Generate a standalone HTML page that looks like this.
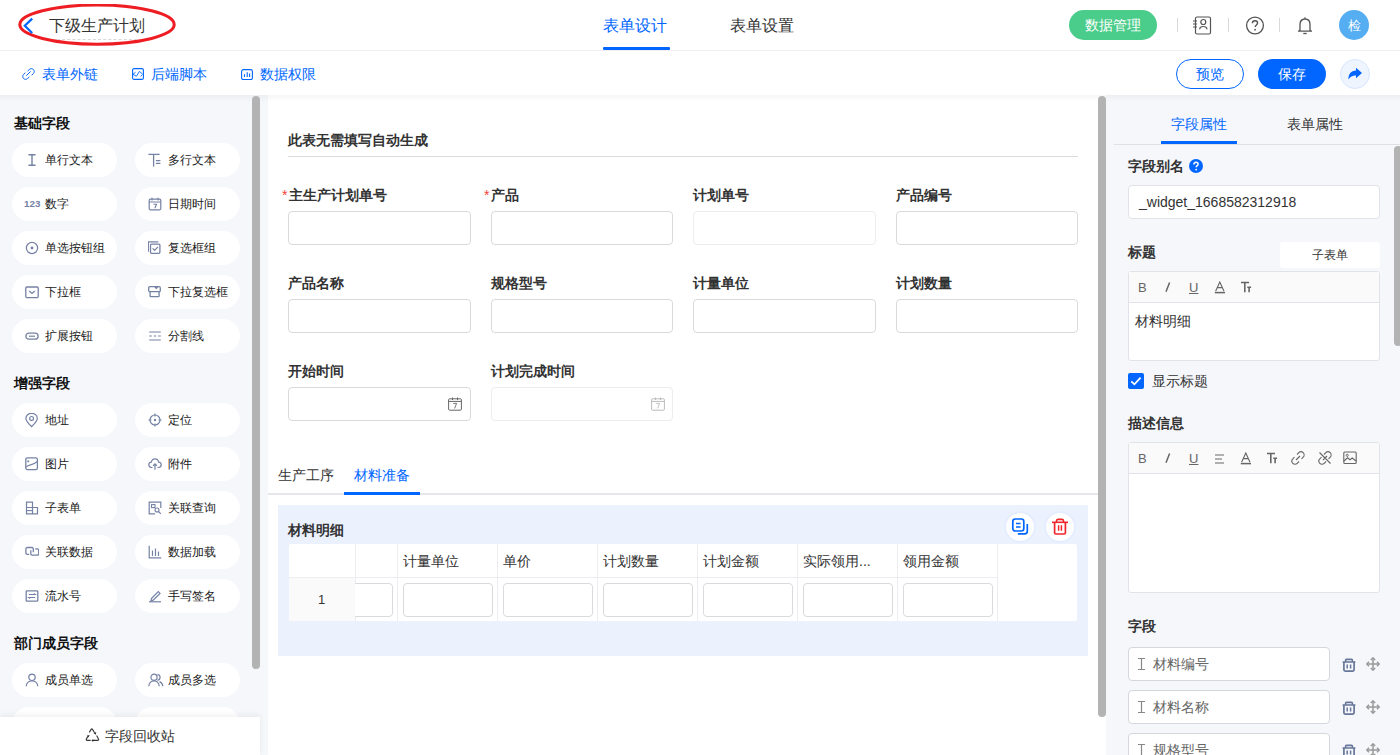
<!DOCTYPE html>
<html><head><meta charset="utf-8">
<style>
*{box-sizing:border-box;margin:0;padding:0}
html,body{width:1400px;height:755px;overflow:hidden;background:#fff;font-family:"Liberation Sans",sans-serif;color:#333}
.abs{position:absolute}
#hdr{position:absolute;left:0;top:0;width:1400px;height:51px;background:#fff;border-bottom:1px solid #f0f0f0}
#bar{position:absolute;left:0;top:51px;width:1400px;height:44px;background:#fff}
#left{position:absolute;left:0;top:95px;width:268px;height:660px;background:#f5f7fb;overflow:hidden}
#canvas{position:absolute;left:268px;top:95px;width:838px;height:660px;background:#fff;overflow:hidden}
#right{position:absolute;left:1106px;top:95px;width:294px;height:660px;background:#f5f7fb;overflow:hidden}
.shadow{position:absolute;left:0;top:95px;width:1400px;height:7px;background:linear-gradient(rgba(0,0,20,0.035),rgba(0,0,20,0));pointer-events:none}
.sb{z-index:3}
.t{position:absolute;white-space:nowrap;line-height:1}
.blue{color:#0066ff}
.sec{position:absolute;left:14px;font-size:14px;font-weight:bold;color:#111;line-height:1}
.pill{position:absolute;width:105px;height:34px;border-radius:17px;background:#fff}
.pill span{position:absolute;left:33px;top:10px;font-size:12px;line-height:14px;color:#1a1a1a;white-space:nowrap}
.pill svg{position:absolute;left:13px;top:10px}
.lbl{position:absolute;font-size:14px;font-weight:bold;color:#333;line-height:1;white-space:nowrap}
.inp{position:absolute;width:183px;height:34px;border:1px solid #d9dadd;border-radius:4px;background:#fff}
.req{color:#f04134;font-weight:normal;position:absolute;left:-7px;top:0}
</style></head><body>

<!-- header -->
<div id="hdr">
  <svg class="abs" style="left:18px;top:4px" width="160" height="43"><ellipse cx="79" cy="20.6" rx="77.2" ry="19.6" fill="none" stroke="#ee1d23" stroke-width="3"/></svg>
  <svg class="abs" style="left:21px;top:17px" width="14" height="18"><path d="M11.2 1.6 L3.8 8.8 L11.2 16" fill="none" stroke="#0066ff" stroke-width="2.2"/></svg>
  <div class="t" style="left:49px;top:18px;font-size:16px;color:#333">下级生产计划</div>
  <div class="abs" style="left:57px;top:39px;width:80px;border-top:1px dashed #d8d8d8"></div>

  <div class="t blue" style="left:603px;top:18px;font-size:16px">表单设计</div>
  <div class="abs" style="left:603px;top:47px;width:67px;height:3px;background:#0066ff;border-radius:1px"></div>
  <div class="t" style="left:730px;top:18px;font-size:16px;color:#333">表单设置</div>

  <div class="abs" style="left:1069px;top:10px;width:88px;height:30px;border-radius:15px;background:#4acc8a"></div>
  <div class="t" style="left:1085px;top:18px;font-size:14px;color:#fff">数据管理</div>
  <div class="abs" style="left:1177px;top:18px;width:1px;height:14px;background:#d9d9d9"></div>
  <div class="abs" style="left:1228px;top:18px;width:1px;height:14px;background:#d9d9d9"></div>
  <div class="abs" style="left:1279px;top:18px;width:1px;height:14px;background:#d9d9d9"></div>
  <!-- contacts icon -->
  <svg class="abs" style="left:1192px;top:16px" width="20" height="19" viewBox="0 0 20 19"><rect x="3.5" y="1" width="15" height="17" rx="1.5" fill="none" stroke="#555" stroke-width="1.2"/><circle cx="11.3" cy="6" r="2.5" fill="none" stroke="#555" stroke-width="1.2"/><path d="M7.6 13.2 C8 9.6 14.6 9.6 15 13.2" fill="none" stroke="#555" stroke-width="1.2"/><path d="M1 5h4M1 8h4M1 11h4" stroke="#555" stroke-width="1.1"/></svg>
  <!-- help -->
  <svg class="abs" style="left:1245px;top:16px" width="20" height="20" viewBox="0 0 20 20"><circle cx="10" cy="9.5" r="8.4" fill="none" stroke="#555" stroke-width="1.3"/><path d="M7.4 7.3 C7.4 5.6 8.6 4.8 10 4.8 C11.5 4.8 12.6 5.7 12.6 7.1 C12.6 8.8 10.2 9.1 10.2 11" fill="none" stroke="#555" stroke-width="1.4"/><circle cx="10.1" cy="13.7" r="0.9" fill="#555"/></svg>
  <!-- bell -->
  <svg class="abs" style="left:1297px;top:16px" width="16" height="19" viewBox="0 0 16 19"><path d="M8 1.2 v1.5" stroke="#555" stroke-width="1.2"/><path d="M3 14 V8.5 C3 5 5.2 3 8 3 C10.8 3 13 5 13 8.5 V14 L14.5 15.2 H1.5 Z" fill="none" stroke="#555" stroke-width="1.3" stroke-linejoin="round"/><path d="M6.3 17.5 h3.4" stroke="#555" stroke-width="1.3"/></svg>
  <div class="abs" style="left:1339px;top:10px;width:30px;height:30px;border-radius:50%;background:#55adf2"></div>
  <div class="t" style="left:1348px;top:19px;font-size:13px;color:#fff">检</div>
</div>

<!-- toolbar -->
<div id="bar">
  <svg class="abs" style="left:22px;top:17px" width="13" height="12" viewBox="0 0 13 12"><path d="M5.5 3.2 L7.3 1.5 C8.5 0.4 10.3 0.4 11.4 1.5 C12.5 2.6 12.5 4.4 11.4 5.5 L9.6 7.3 M7.4 8.8 L5.6 10.5 C4.5 11.6 2.7 11.6 1.6 10.5 C0.5 9.4 0.5 7.6 1.6 6.5 L3.4 4.7 M4.3 7.7 L8.6 3.4" fill="none" stroke="#0066ff" stroke-width="1"/></svg>
  <div class="t blue" style="left:42px;top:16px;font-size:14px">表单外链</div>
  <svg class="abs" style="left:132px;top:17px" width="12" height="12" viewBox="0 0 12 12"><rect x="0.6" y="0.6" width="10.8" height="10.8" rx="1.5" fill="none" stroke="#0066ff" stroke-width="1.1"/><path d="M3.6 4.2 L1 6.3 L4.4 8.3 L7.4 3.4 L10.8 6.3 M10.3 6.8 L8.6 8.3" fill="none" stroke="#0066ff" stroke-width="0.9" stroke-linejoin="round"/></svg>
  <div class="t blue" style="left:151px;top:16px;font-size:14px">后端脚本</div>
  <svg class="abs" style="left:241px;top:17px" width="12" height="12" viewBox="0 0 12 12"><rect x="0.6" y="1.6" width="10.8" height="10" rx="1.8" fill="none" stroke="#0066ff" stroke-width="1.1"/><path d="M3.5 9 V6.2 M6.2 9 V4.2 M8.6 9 V5.6" stroke="#0066ff" stroke-width="1.1"/></svg>
  <div class="t blue" style="left:260px;top:16px;font-size:14px">数据权限</div>

  <div class="abs" style="left:1176px;top:8px;width:68px;height:30px;border-radius:15px;border:1px solid #0066ff;background:#fff"></div>
  <div class="t blue" style="left:1196px;top:16px;font-size:14px">预览</div>
  <div class="abs" style="left:1258px;top:8px;width:68px;height:30px;border-radius:15px;background:#0066ff"></div>
  <div class="t" style="left:1278px;top:16px;font-size:14px;color:#fff">保存</div>
  <div class="abs" style="left:1340px;top:8px;width:30px;height:30px;border-radius:50%;background:#eff5ff;border:1px solid #d7e6fd"></div>
  <svg class="abs" style="left:1347px;top:16px" width="16" height="14" viewBox="0 0 16 14"><path d="M9 0.8 L15 6 L9 11.2 V8.4 C5.5 8.3 3.2 9.8 1.4 12.4 C1.4 7.4 4 3.8 9 3.6 Z" fill="#0066ff"/></svg>
</div>

<!-- LEFT PANEL -->
<div class="abs" style="left:0;top:95px;width:268px;height:660px;background:#f5f7fb"></div>
<div class="sec" style="top:116px">基础字段</div>
<div class="pill" style="left:12px;top:143px"><svg width="14" height="14" viewBox="0 0 14 14"><path d="M3.5 1.8h7M3.5 12.2h7M7 1.8v10.4" stroke="#7582a4" stroke-width="1.4" fill="none"/></svg><span>单行文本</span></div>
<div class="pill" style="left:135px;top:143px"><svg width="14" height="14" viewBox="0 0 14 14"><path d="M0.4 1.4h11.2M5.6 1.4v12.2M7.9 7.6h4.5M7.9 10.4h4.5" stroke="#7582a4" stroke-width="1.3" fill="none"/></svg><span>多行文本</span></div>
<div class="pill" style="left:12px;top:187px"><svg style="left:12px" width="18" height="14" viewBox="0 0 18 14"><text x="0" y="9.9" font-family="Liberation Sans" font-size="9.8" font-weight="bold" fill="#7582a4">123</text></svg><span>数字</span></div>
<div class="pill" style="left:135px;top:187px"><svg width="14" height="14" viewBox="0 0 14 14"><rect x="1.2" y="2.2" width="11.6" height="10.6" rx="1.2" stroke="#7582a4" stroke-width="1.2" fill="none"/><path d="M4 0.8v2.6M10 0.8v2.6M1.2 5h11.6M5.5 7.3h3l-1.6 4" stroke="#7582a4" stroke-width="1.1" fill="none"/></svg><span>日期时间</span></div>
<div class="pill" style="left:12px;top:231px"><svg width="14" height="14" viewBox="0 0 14 14"><circle cx="7" cy="7" r="5.6" stroke="#7582a4" stroke-width="1.2" fill="none"/><circle cx="7" cy="7" r="1.4" fill="#7582a4"/></svg><span>单选按钮组</span></div>
<div class="pill" style="left:135px;top:231px"><svg width="14" height="14" viewBox="0 0 14 14"><path d="M0.3 10.7V0.9h10" stroke="#7582a4" stroke-width="1.3" fill="none"/><rect x="2.5" y="3.1" width="9.4" height="9.2" rx="1" stroke="#7582a4" stroke-width="1.3" fill="none"/><path d="M4.6 7.4l2 2 3.3-3.6" stroke="#7582a4" stroke-width="1.2" fill="none"/></svg><span>复选框组</span></div>
<div class="pill" style="left:12px;top:275px"><svg width="14" height="14" viewBox="0 0 14 14"><rect x="0.8" y="2" width="12.4" height="10.6" rx="1" stroke="#7582a4" stroke-width="1.3" fill="none"/><path d="M4.3 5.9l2.7 2.5 2.7-2.5" stroke="#7582a4" stroke-width="1.3" fill="none"/></svg><span>下拉框</span></div>
<div class="pill" style="left:135px;top:275px"><svg width="14" height="14" viewBox="0 0 14 14"><rect x="0.7" y="1.7" width="11.6" height="5" rx="1.2" stroke="#7582a4" stroke-width="1.3" fill="none"/><path d="M2.1 6.7v4.3c0 0.4 0.3 0.7 0.7 0.7h7.6c0.4 0 0.7-0.3 0.7-0.7V6.7" stroke="#7582a4" stroke-width="1.3" fill="none"/><path d="M6.6 1.7l1.7 2.3 1.7-2.3z" fill="#7582a4" stroke="#7582a4" stroke-width="0.8"/></svg><span>下拉复选框</span></div>
<div class="pill" style="left:12px;top:319px"><svg width="14" height="14" viewBox="0 0 14 14"><rect x="0.9" y="4.2" width="12.2" height="6" rx="3" stroke="#7582a4" stroke-width="1.3" fill="none"/><path d="M4 7.2h6" stroke="#7582a4" stroke-width="1.2"/></svg><span>扩展按钮</span></div>
<div class="pill" style="left:135px;top:319px"><svg width="14" height="14" viewBox="0 0 14 14"><path d="M1.2 3h11.6M1.2 11h11.6M1.2 7h2.6M5.7 7h2.6M10.2 7h2.6" stroke="#7582a4" stroke-width="1.2" fill="none"/></svg><span>分割线</span></div>

<div class="sec" style="top:376px">增强字段</div>
<div class="pill" style="left:12px;top:403px"><svg style="left:13px" width="14" height="15" viewBox="0 0 14 15"><path d="M6.6 13.6C3.6 10.6 0.9 8 0.9 5.4 0.9 2.3 3.5 0.3 6.6 0.3s5.7 2 5.7 5.1c0 2.6-2.7 5.2-5.7 8.2z" stroke="#7582a4" stroke-width="1.2" fill="none"/><circle cx="6.6" cy="5.4" r="1.9" stroke="#7582a4" stroke-width="1.2" fill="none"/></svg><span>地址</span></div>
<div class="pill" style="left:135px;top:403px"><svg width="14" height="14" viewBox="0 0 14 14"><circle cx="7" cy="7" r="5" stroke="#7582a4" stroke-width="1.2" fill="none"/><path d="M7 0.5v3M7 10.5v3M0.5 7h3M10.5 7h3" stroke="#7582a4" stroke-width="1.2"/><circle cx="7" cy="7" r="1.2" fill="#7582a4"/></svg><span>定位</span></div>
<div class="pill" style="left:12px;top:447px"><svg width="14" height="14" viewBox="0 0 14 14"><rect x="0.8" y="0.8" width="11.6" height="11.8" rx="1.6" stroke="#7582a4" stroke-width="1.3" fill="none"/><path d="M1 10.2C4.5 6.5 6.5 9.5 12.3 4.5" stroke="#7582a4" stroke-width="1.1" fill="none"/><path d="M3.2 3.2v2.2M2.1 4.3h2.2" stroke="#7582a4" stroke-width="0.9"/></svg><span>图片</span></div>
<div class="pill" style="left:135px;top:447px"><svg width="14" height="14" viewBox="0 0 14 14"><path d="M4.5 10.5H3.6C2 10.5 0.8 9.3 0.8 7.8 0.8 6.4 1.9 5.2 3.3 5.1 3.7 3.1 5.2 1.8 7 1.8s3.3 1.3 3.7 3.3c1.4 0.1 2.5 1.3 2.5 2.7 0 1.5-1.2 2.7-2.8 2.7h-0.9" stroke="#7582a4" stroke-width="1.2" fill="none"/><path d="M7 12.8V7M5 8.8L7 6.8 9 8.8" stroke="#7582a4" stroke-width="1.2" fill="none"/></svg><span>附件</span></div>
<div class="pill" style="left:12px;top:491px"><svg width="14" height="14" viewBox="0 0 14 14"><path d="M1.5 1.2h6v11.6h-6zM1.5 6.5h11v6.3h-5" stroke="#7582a4" stroke-width="1.2" fill="none"/><path d="M1.5 9.6h6" stroke="#7582a4" stroke-width="1.1"/></svg><span>子表单</span></div>
<div class="pill" style="left:135px;top:491px"><svg width="14" height="14" viewBox="0 0 14 14"><path d="M12.8 7V1.2H1.2v11.6H7" stroke="#7582a4" stroke-width="1.2" fill="none"/><rect x="3.5" y="3.6" width="3.5" height="3" stroke="#7582a4" stroke-width="1.1" fill="none"/><circle cx="9" cy="9" r="2" stroke="#7582a4" stroke-width="1.1" fill="none"/><path d="M10.5 10.5l2.3 2.3" stroke="#7582a4" stroke-width="1.2"/></svg><span>关联查询</span></div>
<div class="pill" style="left:12px;top:535px"><svg width="14" height="14" viewBox="0 0 14 14"><path d="M8.3 7.2V3.9C8.3 3.1 7.7 2.5 6.9 2.5H2.3C1.5 2.5 0.9 3.1 0.9 3.9V8C0.9 8.8 1.5 9.4 2.3 9.4H4.2" stroke="#7582a4" stroke-width="1.3" fill="none"/><path d="M5.8 5.2V8.8C5.8 9.6 6.4 10.2 7.2 10.2H12.3C13.1 10.2 13.7 9.6 13.7 8.8V5.3C13.7 4.5 13.1 3.9 12.3 3.9H10.2" stroke="#7582a4" stroke-width="1.3" fill="none"/></svg><span>关联数据</span></div>
<div class="pill" style="left:135px;top:535px"><svg width="14" height="14" viewBox="0 0 14 14"><path d="M1.2 0.8v12h12M4.5 5.5v5.5M7.5 3.5v7.5M10.5 6.5v4.5" stroke="#7582a4" stroke-width="1.2" fill="none"/></svg><span>数据加载</span></div>
<div class="pill" style="left:12px;top:579px"><svg width="14" height="14" viewBox="0 0 14 14"><rect x="1.2" y="1.8" width="11.6" height="10.4" rx="0.8" stroke="#7582a4" stroke-width="1.3" fill="none"/><path d="M3.8 5.5h6.4l-1.3-1M10.2 8.5H3.8l1.3 1" stroke="#7582a4" stroke-width="1.1" fill="none"/></svg><span>流水号</span></div>
<div class="pill" style="left:135px;top:579px"><svg width="14" height="14" viewBox="0 0 14 14"><path d="M3.5 9.5l6.8-6.8 1.7 1.7-6.8 6.8-2.3 0.6z" stroke="#7582a4" stroke-width="1.2" fill="none"/><path d="M1 12.8h12" stroke="#7582a4" stroke-width="1.2"/></svg><span>手写签名</span></div>

<div class="sec" style="top:636px">部门成员字段</div>
<div class="pill" style="left:12px;top:663px"><svg width="14" height="14" viewBox="0 0 14 14"><circle cx="7" cy="4.3" r="3.2" stroke="#7582a4" stroke-width="1.2" fill="none"/><path d="M1.2 13.2C1.5 9.8 3.8 8 7 8s5.5 1.8 5.8 5.2" stroke="#7582a4" stroke-width="1.2" fill="none"/></svg><span>成员单选</span></div>
<div class="pill" style="left:135px;top:663px"><svg width="16" height="14" viewBox="0 0 16 14"><circle cx="6" cy="4.3" r="3.1" stroke="#7582a4" stroke-width="1.2" fill="none"/><path d="M0.8 13.2C1.1 9.8 3 8 6 8s4.9 1.8 5.2 5.2M9.5 1.3c1.6 0.3 2.6 1.5 2.6 3s-1 2.7-2.6 3M11.5 8.6c1.9 0.7 3.1 2.2 3.3 4.6" stroke="#7582a4" stroke-width="1.2" fill="none"/></svg><span>成员多选</span></div>
<div class="pill" style="left:12px;top:707px"></div>
<div class="pill" style="left:135px;top:707px"></div>
<!-- left scrollbar -->
<div class="abs" style="left:252px;top:96px;width:8px;height:573px;border-radius:4px;background:#b3b3b3;z-index:3"></div>
<!-- recycle bin -->
<div class="abs" style="left:0;top:717px;width:260px;height:38px;background:#fff;box-shadow:0 -2px 6px rgba(0,0,0,0.06)"></div>
<svg class="abs" style="left:85px;top:728px" width="15" height="15" viewBox="0 0 15 15"><g stroke="#333" stroke-width="1.1" fill="none" stroke-linejoin="round"><path d="M4.3 4.4L6.1 1.4Q6.8 0.4 7.5 1.4L9.6 4.8"/><path d="M11.6 7.6L13.5 10.9Q14.1 12.4 12.5 12.4H7.8"/><path d="M5.6 12.4H2.3Q0.7 12.4 1.4 10.9L3.1 8"/></g><path d="M8.6 5.3L11.2 3.9 10.9 6.8z" fill="#333"/><path d="M8.2 10.9L6.3 12.4 8.2 13.9z" fill="#333"/><path d="M2 7.6L4.7 7.1 3.5 9.6z" fill="#333"/></svg>
<div class="t" style="left:105px;top:729px;font-size:14px;color:#333">字段回收站</div>

<!-- CANVAS -->
<div class="abs" style="left:268px;top:95px;width:838px;height:660px;background:#fff"></div>
<div class="lbl" style="left:288px;top:133px;color:#333">此表无需填写自动生成</div>
<div class="abs" style="left:288px;top:156px;width:790px;height:1px;background:#dcdcdc"></div>

<div class="lbl" style="left:289px;top:188px"><span class="req">*</span>主生产计划单号</div>
<div class="lbl" style="left:491px;top:188px"><span class="req">*</span>产品</div>
<div class="lbl" style="left:693px;top:188px">计划单号</div>
<div class="lbl" style="left:896px;top:188px">产品编号</div>
<div class="inp" style="left:288px;top:211px"></div>
<div class="inp" style="left:491px;top:211px;width:182px"></div>
<div class="inp" style="left:693px;top:211px;border-color:#ebedf0"></div>
<div class="inp" style="left:896px;top:211px;width:182px"></div>

<div class="lbl" style="left:288px;top:276px">产品名称</div>
<div class="lbl" style="left:491px;top:276px">规格型号</div>
<div class="lbl" style="left:693px;top:276px">计量单位</div>
<div class="lbl" style="left:896px;top:276px">计划数量</div>
<div class="inp" style="left:288px;top:299px"></div>
<div class="inp" style="left:491px;top:299px;width:182px"></div>
<div class="inp" style="left:693px;top:299px"></div>
<div class="inp" style="left:896px;top:299px;width:182px"></div>

<div class="lbl" style="left:288px;top:364px">开始时间</div>
<div class="lbl" style="left:491px;top:364px">计划完成时间</div>
<div class="inp" style="left:288px;top:387px"></div>
<div class="inp" style="left:491px;top:387px;width:182px;border-color:#ebedf0"></div>
<svg class="abs" style="left:448px;top:397px" width="14" height="14" viewBox="0 0 14 14"><rect x="0.6" y="1.8" width="12.8" height="11.4" rx="1" stroke="#666" stroke-width="1" fill="none"/><path d="M0.6 4.4h12.8M4.5 0.5v2.5M9.5 0.5v2.5" stroke="#666" stroke-width="1"/><path d="M5.2 6.4h3.4L6.6 11.4" stroke="#666" stroke-width="0.9" fill="none"/></svg>
<svg class="abs" style="left:651px;top:397px" width="14" height="14" viewBox="0 0 14 14"><rect x="0.6" y="1.8" width="12.8" height="11.4" rx="1" stroke="#bbb" stroke-width="1" fill="none"/><path d="M0.6 4.4h12.8M4.5 0.5v2.5M9.5 0.5v2.5" stroke="#bbb" stroke-width="1"/><path d="M5.2 6.4h3.4L6.6 11.4" stroke="#bbb" stroke-width="0.9" fill="none"/></svg>

<!-- tabs -->
<div class="t" style="left:278px;top:468px;font-size:14px;color:#333">生产工序</div>
<div class="t blue" style="left:354px;top:468px;font-size:14px">材料准备</div>
<div class="abs" style="left:268px;top:493px;width:830px;height:2px;background:#e4e6ea"></div>
<div class="abs" style="left:344px;top:492px;width:76px;height:3px;background:#0066ff"></div>

<!-- subform -->
<div class="abs" style="left:278px;top:505px;width:810px;height:151px;background:#ebf2fe"></div>
<div class="lbl" style="left:288px;top:523px">材料明细</div>
<div class="abs" style="left:1006px;top:513px;width:28px;height:28px;border-radius:50%;background:#fff;box-shadow:0 0 3px rgba(30,100,255,0.12)"></div>
<svg class="abs" style="left:1011px;top:518px" width="18" height="17" viewBox="0 0 18 17"><rect x="1.8" y="1" width="11" height="12" rx="2.4" stroke="#0066ff" stroke-width="1.7" fill="none"/><path d="M5 5.5h4.6M5 9h4.6" stroke="#0066ff" stroke-width="1.6"/><path d="M16.3 6v7.2c0 1.6-1 2.6-2.6 2.6H6.8" stroke="#0066ff" stroke-width="1.7" fill="none"/></svg>
<div class="abs" style="left:1046px;top:513px;width:28px;height:28px;border-radius:50%;background:#fff;box-shadow:0 0 3px rgba(30,100,255,0.12)"></div>
<svg class="abs" style="left:1051px;top:518px" width="18" height="18" viewBox="0 0 18 18"><path d="M1 4.3h16" stroke="#f0262d" stroke-width="1.6"/><path d="M5.5 4.3V3c0-1 0.6-1.6 1.6-1.6h3.8c1 0 1.6 0.6 1.6 1.6v1.3" stroke="#f0262d" stroke-width="1.6" fill="none"/><path d="M3.6 4.3v10.4c0 0.8 0.5 1.3 1.3 1.3h8.2c0.8 0 1.3-0.5 1.3-1.3V4.3" stroke="#f0262d" stroke-width="1.7" fill="none"/><path d="M7.6 7.2v5.6M10.4 7.2v5.6" stroke="#f0262d" stroke-width="1.5"/></svg>
<div class="abs" style="left:289px;top:544px;width:788px;height:77px;background:#fff;border-radius:2px"></div>
<div class="abs" style="left:289px;top:577px;width:66px;height:44px;background:#fafafa"></div>
<div class="abs" style="left:289px;top:577px;width:708px;height:1px;background:#ebedf0"></div>
<div class="abs" style="left:355px;top:544px;width:1px;height:77px;background:#ebedf0"></div>
<div class="abs" style="left:397px;top:544px;width:1px;height:77px;background:#ebedf0"></div>
<div class="t" style="left:403px;top:554px;font-size:14px;color:#333">计量单位</div>
<div class="inp" style="left:403px;top:583px;width:90px;height:34px"></div>
<div class="abs" style="left:497px;top:544px;width:1px;height:77px;background:#ebedf0"></div>
<div class="t" style="left:503px;top:554px;font-size:14px;color:#333">单价</div>
<div class="inp" style="left:503px;top:583px;width:90px;height:34px"></div>
<div class="abs" style="left:597px;top:544px;width:1px;height:77px;background:#ebedf0"></div>
<div class="t" style="left:603px;top:554px;font-size:14px;color:#333">计划数量</div>
<div class="inp" style="left:603px;top:583px;width:90px;height:34px"></div>
<div class="abs" style="left:697px;top:544px;width:1px;height:77px;background:#ebedf0"></div>
<div class="t" style="left:703px;top:554px;font-size:14px;color:#333">计划金额</div>
<div class="inp" style="left:703px;top:583px;width:90px;height:34px"></div>
<div class="abs" style="left:797px;top:544px;width:1px;height:77px;background:#ebedf0"></div>
<div class="t" style="left:803px;top:554px;font-size:14px;color:#333">实际领用...</div>
<div class="inp" style="left:803px;top:583px;width:90px;height:34px"></div>
<div class="abs" style="left:897px;top:544px;width:1px;height:77px;background:#ebedf0"></div>
<div class="t" style="left:903px;top:554px;font-size:14px;color:#333">领用金额</div>
<div class="inp" style="left:903px;top:583px;width:90px;height:34px"></div>
<div class="abs" style="left:997px;top:544px;width:1px;height:77px;background:#ebedf0"></div>
<div class="inp" style="left:340px;top:583px;width:53px;height:34px"></div>
<div class="abs" style="left:289px;top:578px;width:66px;height:43px;background:#fafafa"></div>
<div class="t" style="left:318px;top:593px;font-size:13px;color:#333">1</div>
<div class="abs" style="left:1098px;top:96px;width:8px;height:621px;border-radius:4px;background:#b3b3b3;z-index:3"></div>

<!-- RIGHT PANEL -->
<div class="abs" style="left:1106px;top:95px;width:294px;height:660px;background:#f5f7fb"></div>
<div class="t blue" style="left:1171px;top:117px;font-size:14px">字段属性</div>
<div class="t" style="left:1287px;top:117px;font-size:14px;color:#333">表单属性</div>
<div class="abs" style="left:1114px;top:144px;width:286px;height:1px;background:#dfe1e6"></div>
<div class="abs" style="left:1161px;top:141px;width:76px;height:3px;background:#0066ff"></div>
<div class="abs" style="left:1394px;top:146px;width:8px;height:200px;border-radius:4px;background:#b3b3b3;z-index:3"></div>

<div class="lbl" style="left:1128px;top:159px">字段别名</div>
<svg class="abs" style="left:1189px;top:159px" width="14" height="14" viewBox="0 0 14 14"><circle cx="7" cy="7" r="7" fill="#0066ff"/><path d="M4.9 5.4C4.9 4.1 5.8 3.3 7 3.3s2.1 0.8 2.1 1.9c0 1.4-1.9 1.6-1.9 3.1" stroke="#fff" stroke-width="1.5" fill="none"/><circle cx="7.2" cy="10.6" r="0.95" fill="#fff"/></svg>
<div class="abs" style="left:1128px;top:185px;width:252px;height:34px;background:#fff;border:1px solid #e1e3e8;border-radius:4px"></div>
<div class="t" style="left:1139px;top:195px;font-size:14px;color:#333">_widget_1668582312918</div>

<div class="lbl" style="left:1128px;top:245px">标题</div>
<div class="abs" style="left:1280px;top:242px;width:100px;height:26px;background:#fff;border-radius:3px"></div>
<div class="t" style="left:1312px;top:249px;font-size:12px;color:#333">子表单</div>
<div class="abs" style="left:1128px;top:271px;width:252px;height:90px;background:#fff;border:1px solid #e1e3e8;border-radius:3px"></div>
<div class="abs" style="left:1129px;top:272px;width:250px;height:31px;background:#fafafa;border-bottom:1px solid #e1e3e8"></div>
<div class="t" style="left:1135px;top:314px;font-size:14px;color:#333">材料明细</div>

<div class="abs" style="left:1128px;top:373px;width:16px;height:16px;background:#0066ff;border-radius:2px"></div>
<svg class="abs" style="left:1128px;top:373px" width="16" height="16" viewBox="0 0 16 16"><path d="M3.3 8.3l3.1 3 6.2-6.6" stroke="#fff" stroke-width="1.8" fill="none"/></svg>
<div class="t" style="left:1152px;top:374px;font-size:14px;color:#333">显示标题</div>

<div class="lbl" style="left:1128px;top:416px">描述信息</div>
<div class="abs" style="left:1128px;top:442px;width:252px;height:151px;background:#fff;border:1px solid #e1e3e8;border-radius:3px"></div>
<div class="abs" style="left:1129px;top:443px;width:250px;height:31px;background:#fafafa;border-bottom:1px solid #e1e3e8"></div>

<div class="lbl" style="left:1128px;top:619px">字段</div>
<div class="t" style="left:1138px;top:281px;font-size:13px;color:#666">B</div>
<svg class="abs" style="left:1164px;top:282px" width="7" height="11" viewBox="0 0 7 11"><path d="M5.6 0.6L2 9.8" stroke="#666" stroke-width="1.5"/></svg>
<div class="t" style="left:1189px;top:281px;font-size:13px;color:#666;text-decoration:underline">U</div>
<svg class="abs" style="left:1214px;top:281px" width="12" height="13" viewBox="0 0 12 13"><path d="M1.6 10.2L5.8 1 10 10.2M3.3 6.6h5" stroke="#666" stroke-width="1.1" fill="none"/><path d="M0.8 11.6h10.2" stroke="#666" stroke-width="1.5"/></svg>
<svg class="abs" style="left:1240px;top:281px" width="12" height="13" viewBox="0 0 12 13"><path d="M1 1.5h8M4.8 1.5v9.8M7.3 6.3h3.8M9.1 6.3v5" stroke="#666" stroke-width="1.6" fill="none"/></svg>
<div class="t" style="left:1138px;top:452px;font-size:13px;color:#666">B</div>
<svg class="abs" style="left:1164px;top:453px" width="7" height="11" viewBox="0 0 7 11"><path d="M5.6 0.6L2 9.8" stroke="#666" stroke-width="1.5"/></svg>
<div class="t" style="left:1189px;top:452px;font-size:13px;color:#666;text-decoration:underline">U</div>
<svg class="abs" style="left:1214px;top:453px" width="12" height="12" viewBox="0 0 12 12"><path d="M1 2h9M1 6h7M1 10h9" stroke="#666" stroke-width="1.1"/></svg>
<svg class="abs" style="left:1240px;top:452px" width="12" height="13" viewBox="0 0 12 13"><path d="M1.6 10.2L5.8 1 10 10.2M3.3 6.6h5" stroke="#666" stroke-width="1.1" fill="none"/><path d="M0.8 11.6h10.2" stroke="#666" stroke-width="1.5"/></svg>
<svg class="abs" style="left:1266px;top:452px" width="12" height="13" viewBox="0 0 12 13"><path d="M1 1.5h8M4.8 1.5v9.8M7.3 6.3h3.8M9.1 6.3v5" stroke="#666" stroke-width="1.6" fill="none"/></svg>
<svg class="abs" style="left:1291px;top:451px" width="14" height="14" viewBox="0 0 14 14"><path d="M6 3.5l1.8-1.8c1.2-1.2 3.2-1.2 4.4 0s1.2 3.2 0 4.4L10.5 8M8 10.5l-1.8 1.8c-1.2 1.2-3.2 1.2-4.4 0s-1.2-3.2 0-4.4L3.5 6M5 9l4-4" stroke="#666" stroke-width="1.1" fill="none"/></svg>
<svg class="abs" style="left:1318px;top:451px" width="14" height="14" viewBox="0 0 14 14"><path d="M6 3.5l1.8-1.8c1.2-1.2 3.2-1.2 4.4 0s1.2 3.2 0 4.4L10.5 8M8 10.5l-1.8 1.8c-1.2 1.2-3.2 1.2-4.4 0s-1.2-3.2 0-4.4L3.5 6M5 9l4-4M1.5 1.5l11 11" stroke="#666" stroke-width="1.1" fill="none"/></svg>
<svg class="abs" style="left:1343px;top:451px" width="14" height="14" viewBox="0 0 14 14"><rect x="0.8" y="1" width="12.4" height="11.5" rx="1" stroke="#666" stroke-width="1.1" fill="none"/><path d="M1 10l3.5-3.2 2.5 2 2.2-1.8 3.8 3" stroke="#666" stroke-width="1.1" fill="none"/><circle cx="4.2" cy="4.3" r="1.1" stroke="#666" stroke-width="0.9" fill="none"/></svg>
<div class="abs" style="left:1128px;top:647px;width:202px;height:34px;background:#fff;border:1px solid #d4d7de;border-radius:4px"></div>
<svg class="abs" style="left:1136px;top:657px" width="12" height="14" viewBox="0 0 12 14"><path d="M2 1.5h7M2 12.5h7M5.5 1.5v11" stroke="#888" stroke-width="1.2" fill="none"/></svg>
<div class="t" style="left:1153px;top:657px;font-size:14px;color:#666">材料编号</div>
<svg class="abs" style="left:1342px;top:658px" width="14" height="14" viewBox="0 0 14 14"><path d="M0.6 4h12.8M3.6 4V2.2c0-0.5 0.3-0.8 0.8-0.8h5.2c0.5 0 0.8 0.3 0.8 0.8V4" stroke="#677799" stroke-width="1.6" fill="none"/><path d="M1.9 4v7.8c0 0.8 0.5 1.3 1.3 1.3h7.6c0.8 0 1.3-0.5 1.3-1.3V4" stroke="#677799" stroke-width="1.7" fill="none"/><path d="M5.2 6.5v4M8.6 6.5v4" stroke="#677799" stroke-width="1.5"/></svg>
<svg class="abs" style="left:1366px;top:657px" width="14" height="14" viewBox="0 0 14 14"><path d="M7 1v12M1 7h12" stroke="#999" stroke-width="1.5"/><path d="M4.8 3L7 0.8 9.2 3M4.8 11L7 13.2 9.2 11M3 4.8L0.8 7 3 9.2M11 4.8L13.2 7 11 9.2" stroke="#999" stroke-width="1.4" fill="none"/></svg>
<div class="abs" style="left:1128px;top:690px;width:202px;height:34px;background:#fff;border:1px solid #d4d7de;border-radius:4px"></div>
<svg class="abs" style="left:1136px;top:700px" width="12" height="14" viewBox="0 0 12 14"><path d="M2 1.5h7M2 12.5h7M5.5 1.5v11" stroke="#888" stroke-width="1.2" fill="none"/></svg>
<div class="t" style="left:1153px;top:700px;font-size:14px;color:#666">材料名称</div>
<svg class="abs" style="left:1342px;top:701px" width="14" height="14" viewBox="0 0 14 14"><path d="M0.6 4h12.8M3.6 4V2.2c0-0.5 0.3-0.8 0.8-0.8h5.2c0.5 0 0.8 0.3 0.8 0.8V4" stroke="#677799" stroke-width="1.6" fill="none"/><path d="M1.9 4v7.8c0 0.8 0.5 1.3 1.3 1.3h7.6c0.8 0 1.3-0.5 1.3-1.3V4" stroke="#677799" stroke-width="1.7" fill="none"/><path d="M5.2 6.5v4M8.6 6.5v4" stroke="#677799" stroke-width="1.5"/></svg>
<svg class="abs" style="left:1366px;top:700px" width="14" height="14" viewBox="0 0 14 14"><path d="M7 1v12M1 7h12" stroke="#999" stroke-width="1.5"/><path d="M4.8 3L7 0.8 9.2 3M4.8 11L7 13.2 9.2 11M3 4.8L0.8 7 3 9.2M11 4.8L13.2 7 11 9.2" stroke="#999" stroke-width="1.4" fill="none"/></svg>
<div class="abs" style="left:1128px;top:733px;width:202px;height:34px;background:#fff;border:1px solid #d4d7de;border-radius:4px"></div>
<svg class="abs" style="left:1136px;top:743px" width="12" height="14" viewBox="0 0 12 14"><path d="M2 1.5h7M2 12.5h7M5.5 1.5v11" stroke="#888" stroke-width="1.2" fill="none"/></svg>
<div class="t" style="left:1153px;top:743px;font-size:14px;color:#666">规格型号</div>
<svg class="abs" style="left:1342px;top:744px" width="14" height="14" viewBox="0 0 14 14"><path d="M0.6 4h12.8M3.6 4V2.2c0-0.5 0.3-0.8 0.8-0.8h5.2c0.5 0 0.8 0.3 0.8 0.8V4" stroke="#677799" stroke-width="1.6" fill="none"/><path d="M1.9 4v7.8c0 0.8 0.5 1.3 1.3 1.3h7.6c0.8 0 1.3-0.5 1.3-1.3V4" stroke="#677799" stroke-width="1.7" fill="none"/><path d="M5.2 6.5v4M8.6 6.5v4" stroke="#677799" stroke-width="1.5"/></svg>
<svg class="abs" style="left:1366px;top:743px" width="14" height="14" viewBox="0 0 14 14"><path d="M7 1v12M1 7h12" stroke="#999" stroke-width="1.5"/><path d="M4.8 3L7 0.8 9.2 3M4.8 11L7 13.2 9.2 11M3 4.8L0.8 7 3 9.2M11 4.8L13.2 7 11 9.2" stroke="#999" stroke-width="1.4" fill="none"/></svg>

<div class="shadow"></div>

</body></html>
